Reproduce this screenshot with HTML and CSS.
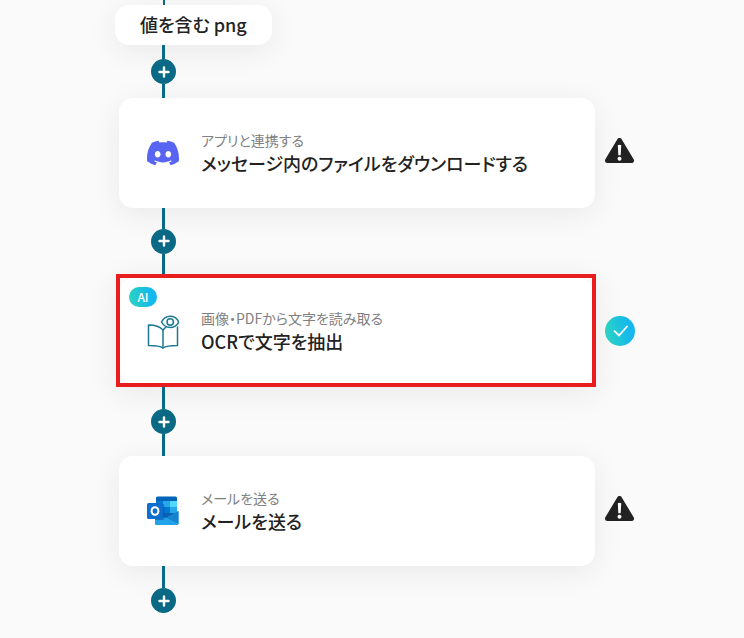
FILE: index.html
```html
<!DOCTYPE html>
<html lang="ja">
<head>
    <meta charset="UTF-8">
    <meta name="viewport" content="width=device-width, initial-scale=1.0">
    <title>フロー</title>
    <link rel="stylesheet" href="styles.css">
</head>
<body>
    <main class="flow">
        <div class="stub"></div>
        <div class="branch">値を含む png</div>

        <div class="connector connector-first">
            <button class="add" type="button" aria-label="追加">
                <svg viewBox="0 0 12 12"><path d="M6 1.5v9M1.5 6h9"/></svg>
            </button>
        </div>

        <div class="row">
            <section class="card">
                <svg class="icon" viewBox="0 0 24 24" fill="#5865f2">
                    <path d="M20.317 4.3698a19.7913 19.7913 0 00-4.8851-1.5152.0741.0741 0 00-.0785.0371c-.211.3753-.4447.8648-.6083 1.2495-1.8447-.2762-3.68-.2762-5.4868 0-.1636-.3933-.4058-.8742-.6177-1.2495a.077.077 0 00-.0785-.037 19.7363 19.7363 0 00-4.8852 1.515.0699.0699 0 00-.0321.0277C.5334 9.0458-.319 13.5799.0992 18.0578a.0824.0824 0 00.0312.0561c2.0528 1.5076 4.0413 2.4228 5.9929 3.0294a.0777.0777 0 00.0842-.0276c.4616-.6304.8731-1.2952 1.226-1.9942a.076.076 0 00-.0416-.1057c-.6528-.2476-1.2743-.5495-1.8722-.8923a.077.077 0 01-.0076-.1277c.1258-.0943.2517-.1923.3718-.2914a.0743.0743 0 01.0776-.0105c3.9278 1.7933 8.18 1.7933 12.0614 0a.0739.0739 0 01.0785.0095c.1202.099.246.1981.3728.2924a.077.077 0 01-.0066.1276 12.2986 12.2986 0 01-1.873.8914.0766.0766 0 00-.0407.1067c.3604.698.7719 1.3628 1.225 1.9932a.076.076 0 00.0842.0286c1.961-.6067 3.9495-1.5219 6.0023-3.0294a.077.077 0 00.0313-.0552c.5004-5.177-.8382-9.6739-3.5485-13.6604a.061.061 0 00-.0312-.0286zM8.02 15.3312c-1.1825 0-2.1569-1.0857-2.1569-2.419 0-1.3332.9555-2.4189 2.157-2.4189 1.2108 0 2.1757 1.0952 2.1568 2.419 0 1.3332-.9555 2.4189-2.1569 2.4189zm7.9748 0c-1.1825 0-2.1569-1.0857-2.1569-2.419 0-1.3332.9554-2.4189 2.1569-2.4189 1.2108 0 2.1757 1.0952 2.1568 2.419 0 1.3332-.946 2.4189-2.1568 2.4189Z"/>
                </svg>
                <div class="text">
                    <p class="label">アプリと連携する</p>
                    <h2 class="title">メッセージ内のファイルをダウンロードする</h2>
                </div>
            </section>
            <svg class="status" viewBox="0 0 30 30" role="img" aria-label="警告">
                <path d="M14.5 2.5L26.500 22.500H2.500z" fill="#222" stroke="#222" stroke-width="5" stroke-linejoin="round"/>
                <path d="M12.800 7.200q1.700-1 3.400 0L15.700 17.200h-2.400z" fill="#fff"/>
                <circle cx="14.500" cy="20.800" r="2" fill="#fff"/>
            </svg>
        </div>

        <div class="connector">
            <button class="add" type="button" aria-label="追加">
                <svg viewBox="0 0 12 12"><path d="M6 1.5v9M1.5 6h9"/></svg>
            </button>
        </div>

        <!-- selected step -->
        <div class="row row-selected">
            <div class="frame">
                <section class="card">
                    <span class="badge">AI</span>
                    <svg class="icon icon-book" viewBox="0 0 32 34" fill="none" stroke="#1b7890" stroke-width="1.5" stroke-linejoin="round" stroke-linecap="round">
                        <path d="M16 15C13 11.500 9 10 1.500 10v20.500c6 0 11 0 14.500 2.500 3.500-2.500 8-2.500 14.500-2.500V12"/>
                        <path d="M16 15v18M16 15l3-3"/>
                        <path d="M14.500 7C18.500-.6 28-.6 31.800 7c-3.800 7.200-13.300 7.200-17.300 0z"/>
                        <circle cx="23.200" cy="7" r="3.200"/>
                    </svg>
                    <div class="text">
                        <p class="label">画像・PDFから文字を読み取る</p>
                        <h2 class="title">OCRで文字を抽出</h2>
                    </div>
                </section>
            </div>
            <svg class="status" viewBox="0 0 30 30" role="img" aria-label="完了">
                <defs>
                    <linearGradient id="done" x1="0" y1="0.6" x2="1" y2="0.4">
                        <stop offset="0" stop-color="#2dd4bf"/>
                        <stop offset="0.8" stop-color="#14b8ee"/>
                    </linearGradient>
                </defs>
                <circle cx="15" cy="15" r="15" fill="url(#done)"/>
                <path d="M9.500 15.200l4.500 4.300 8-9" fill="none" stroke="#fff" stroke-width="1.800" stroke-linecap="round"/>
            </svg>
        </div>

        <div class="connector connector-long">
            <button class="add" type="button" aria-label="追加">
                <svg viewBox="0 0 12 12"><path d="M6 1.5v9M1.5 6h9"/></svg>
            </button>
        </div>

        <div class="row">
            <section class="card">
                <svg class="icon" viewBox="0 0 32 32">
                    <path d="M10.500 1.500h18a1.500 1.500 0 0 1 1.500 1.500v21H9V3a1.500 1.500 0 0 1 1.500-1.500z" fill="#0364b8"/>
                    <path d="M9 6h7v6H9z" fill="#0078d4"/>
                    <path d="M16 6h7v6h-7z" fill="#28a8ea"/>
                    <path d="M23 6h7v6h-7z" fill="#50d9ff"/>
                    <path d="M16 12h7v6h-7z" fill="#0078d4"/>
                    <path d="M23 12h7v6h-7z" fill="#28a8ea"/>
                    <path d="M16 18h14v4H16z" fill="#0b62b4"/>
                    <path d="M31.500 16v12.500a1.500 1.500 0 0 1-1.500 1.500H9.500A1.500 1.500 0 0 1 8 28.500V18l11 5z" fill="#28a8ea"/>
                    <path d="M31.500 16v13L19 22.800z" fill="#1583d0"/>
                    <path d="M8 23.500h10.500L31 29.500 30 30H9.500A1.500 1.500 0 0 1 8 28.500z" fill="#22a2ea"/>
                    <path d="M9 9h7a1.500 1.500 0 0 1 1.500 1.500V23a2 2 0 0 1-2 2H8z" fill="#0a4f94" opacity=".5"/>
                    <rect x="0" y="8" width="16" height="16" rx="1.500" fill="#0f6fcf"/>
                    <ellipse cx="8" cy="16" rx="3.400" ry="3.800" fill="none" stroke="#fff" stroke-width="2.100"/>
                </svg>
                <div class="text">
                    <p class="label">メールを送る</p>
                    <h2 class="title">メールを送る</h2>
                </div>
            </section>
            <svg class="status" viewBox="0 0 30 30" role="img" aria-label="警告">
                <path d="M14.5 2.5L26.500 22.500H2.500z" fill="#222" stroke="#222" stroke-width="5" stroke-linejoin="round"/>
                <path d="M12.800 7.200q1.700-1 3.400 0L15.700 17.200h-2.400z" fill="#fff"/>
                <circle cx="14.500" cy="20.800" r="2" fill="#fff"/>
            </svg>
        </div>

        <div class="connector connector-last">
            <button class="add" type="button" aria-label="追加">
                <svg viewBox="0 0 12 12"><path d="M6 1.5v9M1.5 6h9"/></svg>
            </button>
        </div>
    </main>
</body>
</html>
```
FILE: styles.css
```css
* {
    box-sizing: border-box;
}

body {
    margin: 0;
    background: #fafafa;
    color: #222;
    font-family: "Noto Sans CJK JP", "Noto Sans", sans-serif;
    font-feature-settings: "palt";
}

.flow {
    display: flex;
    flex-direction: column;
    padding: 0 109px 24px 115px;
}

.stub {
    width: 2px;
    height: 5px;
    margin-left: 48px;
    background: #0a6a85;
}

.branch {
    align-self: flex-start;
    padding: 7px 25px 9px;
    border-radius: 14px;
    background: #fff;
    box-shadow: 0 6px 30px rgba(0, 0, 0, 0.07);
    font-size: 18px;
    font-weight: 500;
    line-height: 24px;
}

/* vertical line with the add button in the middle */
.connector {
    position: relative;
    z-index: 1;
    display: flex;
    flex-direction: column;
    align-items: center;
    width: 25px;
    height: 66px;
    margin-left: 36px;
}

.connector::before,
.connector::after {
    content: "";
    flex: 1;
    width: 3px;
    background: #0a6a85;
}

.connector-first {
    height: 53px;
}

.connector-long {
    height: 69px;
}

.connector-last {
    height: 47px;
}

.connector-last::after {
    display: none;
}

.add {
    display: flex;
    align-items: center;
    justify-content: center;
    width: 25px;
    height: 25px;
    padding: 0;
    border: none;
    border-radius: 50%;
    background: #0a6a85;
    cursor: pointer;
}

.add svg {
    width: 12px;
    height: 12px;
    fill: none;
    stroke: #fff;
    stroke-width: 2.4;
    stroke-linecap: round;
}

.row {
    display: flex;
    align-items: center;
    gap: 10px;
    margin-left: 4px;
}

.row-selected {
    gap: 9px;
    margin-left: 1px;
}

.card {
    position: relative;
    display: flex;
    flex: 1;
    align-items: center;
    gap: 22px;
    padding: 31px 28px;
    border-radius: 14px;
    background: #fff;
    box-shadow: 0 6px 30px rgba(0, 0, 0, 0.07);
}

.frame {
    flex: 1;
    border: 4px solid #e81e1e;
    background: #fafafa;
    box-shadow: 0 6px 30px rgba(0, 0, 0, 0.07);
}

.frame .card {
    padding: 29px 27px 28px;
    box-shadow: none;
}

.icon {
    flex: none;
    width: 32px;
    height: 32px;
}

.icon-book {
    height: 34px;
    margin-top: 2px;
}

.text {
    padding-bottom: 2px;
}

.label,
.title {
    margin: 0;
}

.label {
    color: #808080;
    font-size: 14px;
    font-weight: 400;
    line-height: 22px;
}

.title {
    font-size: 18px;
    font-weight: 500;
    line-height: 24px;
}

.status {
    flex: none;
    width: 30px;
    height: 30px;
}

.badge {
    position: absolute;
    top: 9px;
    left: 9px;
    width: 28px;
    border-radius: 10px;
    background: linear-gradient(80deg, #2dd4bf, #14b8ee 80%);
    color: #fff;
    font-size: 12px;
    font-weight: 500;
    line-height: 20px;
    text-align: center;
}
```
